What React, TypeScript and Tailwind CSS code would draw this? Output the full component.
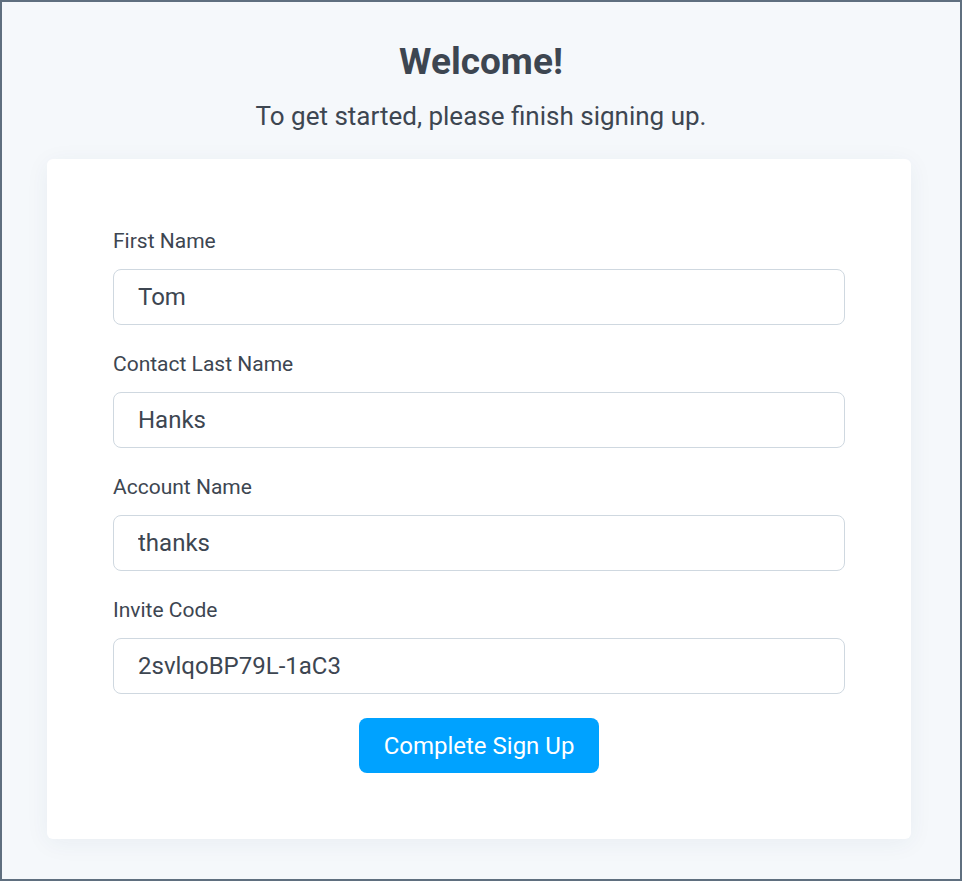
export default function App() {
  const fields = [
    { label: "First Name", value: "Tom" },
    { label: "Contact Last Name", value: "Hanks" },
    { label: "Account Name", value: "thanks" },
    { label: "Invite Code", value: "2svlqoBP79L-1aC3" },
  ];

  return (
    <div
      className="h-[881px] w-[962px] border-2 border-[#5f6f7f] bg-[#f5f8fb] text-[#3d4651]"
      style={{ fontFamily: "Roboto, 'Noto Sans', sans-serif" }}
    >
      {/* Header */}
      <div className="flex flex-col items-center pt-[35px]">
        <h1 className="text-[37px] font-bold leading-[50px]">Welcome!</h1>
        <p className="mt-[13px] text-[26px] leading-[32px]">
          To get started, please finish signing up.
        </p>
      </div>

      {/* Card */}
      <div className="ml-[45px] mt-[27px] w-[864px] rounded-md bg-white px-[66px] pt-[68px] pb-[66px] shadow-[0_4px_24px_rgba(30,60,100,0.06)]">
        <form className="flex flex-col">
          <div className="flex flex-col gap-[25px]">
            {fields.map((f) => (
              <div key={f.label} className="flex flex-col">
                <label className="text-[21px] leading-[28px]">{f.label}</label>
                <input
                  readOnly
                  value={f.value}
                  className="mt-[14px] h-[56px] w-full rounded-lg border border-[#cfd8e0] bg-white px-[24px] text-[24px] text-[#3d4651] outline-none"
                />
              </div>
            ))}
          </div>
          <div className="mt-[24px] flex justify-center">
            <button
              type="button"
              className="h-[55px] w-[240px] rounded-lg bg-[#00a2ff] text-[24px] text-white"
            >
              Complete Sign Up
            </button>
          </div>
        </form>
      </div>
    </div>
  );
}
